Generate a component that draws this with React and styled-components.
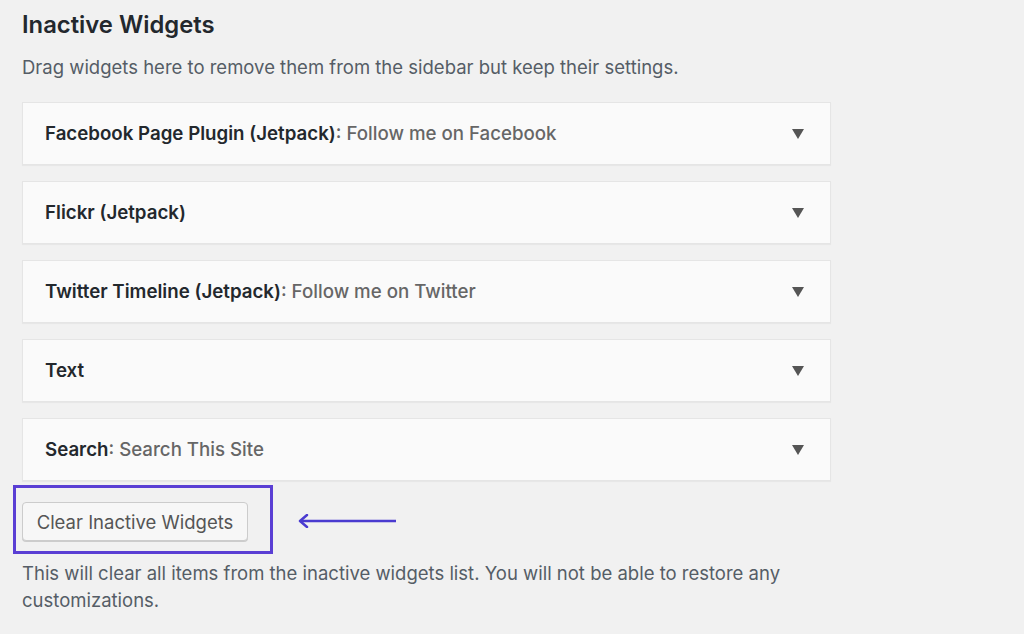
import React from "react";
import styled, { createGlobalStyle } from "styled-components";

const Global = createGlobalStyle`
  html, body { margin: 0; padding: 0; background: #f1f1f1; }
  body { font-family: Inter, "Noto Sans", "Liberation Sans", sans-serif; -webkit-font-smoothing: antialiased; }
`;

const Page = styled.div`
  width: 1024px;
  height: 634px;
  box-sizing: border-box;
  padding: 10px 0 0 22px;
  overflow: hidden;
`;

const Title = styled.h2`
  margin: 0;
  font-size: 23.8px;
  line-height: 30px;
  font-weight: 600;
  color: #23282d;
`;

const Description = styled.p`
  margin: 13px 0 21px;
  font-size: 18.5px;
  line-height: 28px;
  color: #555d66;
`;

const WidgetList = styled.div`
  display: flex;
  flex-direction: column;
  gap: 16px;
  width: 809px;
`;

const Widget = styled.div`
  height: 63px;
  box-sizing: border-box;
  display: flex;
  align-items: center;
  justify-content: space-between;
  padding: 0 22px 0 22px;
  background: #fafafa;
  border: 1px solid #e5e5e5;
  box-shadow: 0 1px 1px rgba(0, 0, 0, 0.04);
`;

const WidgetTitle = styled.span`
  font-size: 18.7px;
  font-weight: 600;
  color: #23282d;
`;

const WidgetSub = styled.span`
  font-weight: 500;
  color: #666;
`;

const Toggle = styled.svg`
  width: 12px;
  height: 10px;
  margin-right: 4px;
  flex: none;
`;

const ButtonRow = styled.div`
  display: flex;
  align-items: center;
  margin-top: 21px;
  gap: 50px;
`;

const ButtonWrap = styled.div`
  position: relative;
`;

const Highlight = styled.div`
  position: absolute;
  left: -9px;
  top: -17px;
  width: 260px;
  height: 69px;
  box-sizing: border-box;
  border: 3px solid #5a3fd4;
  pointer-events: none;
`;

const ClearButton = styled.button`
  height: 39px;
  width: 226px;
  box-sizing: border-box;
  padding: 0 12px;
  font-family: inherit;
  font-size: 18.5px;
  color: #555;
  background: #f7f7f7;
  border: 1px solid #ccc;
  border-radius: 4px;
  box-shadow: 0 1px 0 #ccc;
`;

const Arrow = styled.svg`
  width: 100px;
  height: 14px;
  margin-top: -2px;
`;

const Note = styled.p`
  margin: 19px 0 0;
  width: 800px;
  font-size: 18.5px;
  line-height: 27px;
  color: #555d66;
`;

const widgets = [
  { name: "Facebook Page Plugin (Jetpack)", sub: "Follow me on Facebook" },
  { name: "Flickr (Jetpack)" },
  { name: "Twitter Timeline (Jetpack)", sub: "Follow me on Twitter" },
  { name: "Text" },
  { name: "Search", sub: "Search This Site" },
];

export default function App() {
  return (
    <Page>
      <Global />
      <Title>Inactive Widgets</Title>
      <Description>
        Drag widgets here to remove them from the sidebar but keep their settings.
      </Description>
      <WidgetList>
        {widgets.map((w) => (
          <Widget key={w.name}>
            <WidgetTitle>
              {w.name}
              {w.sub && <WidgetSub>: {w.sub}</WidgetSub>}
            </WidgetTitle>
            <Toggle viewBox="0 0 12 10">
              <path d="M0 0 L12 0 L6 10 Z" fill="#555" />
            </Toggle>
          </Widget>
        ))}
      </WidgetList>
      <ButtonRow>
        <ButtonWrap>
          <ClearButton>Clear Inactive Widgets</ClearButton>
          <Highlight />
        </ButtonWrap>
        <Arrow viewBox="0 0 100 14">
          <path d="M98 7 H3" stroke="#4a3bd0" strokeWidth="2.5" fill="none" />
          <path d="M9 1 L2 7 L9 13" stroke="#4a3bd0" strokeWidth="2.5" fill="none" strokeLinejoin="round" strokeLinecap="round" />
        </Arrow>
      </ButtonRow>
      <Note>
        This will clear all items from the inactive widgets list. You will not be able to restore any customizations.
      </Note>
    </Page>
  );
}
